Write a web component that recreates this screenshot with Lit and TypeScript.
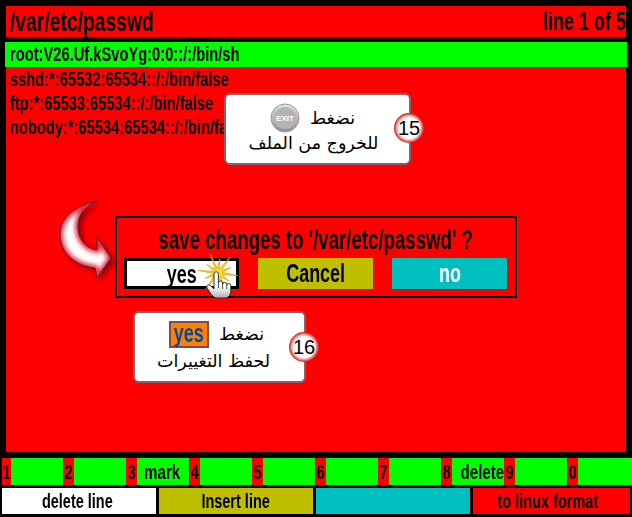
import { LitElement, html, css, svg } from "lit";
import { customElement } from "lit/decorators.js";

const keys = [["1",""],["2",""],["3","mark"],["4",""],["5",""],["6",""],["7",""],["8","delete"],["9",""],["0",""]];

const burst = (cx: number, cy: number) => {
  const pts: string[] = [];
  for (let i = 0; i < 24; i++) {
    const a = (i * Math.PI) / 12 + 0.13;
    const r = i % 2 ? 4.5 : i % 4 === 0 ? 20 : 14;
    pts.push(`${(cx + r * Math.cos(a)).toFixed(1)},${(cy + r * Math.sin(a)).toFixed(1)}`);
  }
  return pts.join(" ");
};

const arrowPath = "M97 201C78 205 60 216 60 234C60 254 76 266 95 268L97 278L111 258L97 237L97 250C84 248 78 238 78 226C78 214 86 206 97 201Z";

@customElement("app-root")
export class AppRoot extends LitElement {
  static styles = css`
    :host { display: block; position: relative; width: 632px; height: 517px; overflow: hidden; background: #000; color: #000;
      font-family: "Liberation Sans", sans-serif; font-weight: 700; }
    .t { display: inline-block; white-space: nowrap; transform: scaleX(.69); transform-origin: center; flex: none; }
    .t.l { transform-origin: left center; }
    .t.r { transform-origin: right center; }
    .screen { display: flex; flex-direction: column; height: 517px; }
    .title { margin: 6px 6px 5px; height: 31px; background: #f00; display: flex; justify-content: space-between; align-items: center; padding-left: 4px; font-size: 28px; line-height: 31px; }
    .title .pos { font-size: 26px; }
    .main { flex: none; margin: 0 6px; height: 410px; background: #f00; display: flex; flex-direction: column; }
    .row { height: 24px; line-height: 24px; padding-left: 4px; font-size: 21px; white-space: nowrap; }
    .row .t { transform: scaleX(.7); }
    .row.sel { height: 25px; background: #0f0; margin: 0 -1px; padding-left: 5px; }
    .keys { margin: 6px 0 0; height: 27px; display: grid; grid-template-columns: repeat(9, 63px) 65px; }
    .key { display: flex; background: #0f0; font-size: 21px; line-height: 27px; }
    .key:first-child { background: linear-gradient(90deg, #000 2px, #0f0 2px); }
    .num { width: 11px; background: #f00; flex: none; display: flex; justify-content: center; }
    .key:first-child .num { width: 9px; margin-left: 2px; }
    .lab { flex: 1; display: flex; justify-content: center; padding-right: 6px; }
    .lab .t { transform: scaleX(.72); }
    .soft { margin: 3px 2px 0; height: 26px; display: grid; grid-template-columns: 154px 154px 154px 157px; column-gap: 3px; }
    .soft div { display: flex; justify-content: center; line-height: 26px; font-size: 21px; }
    .soft .white { padding-right: 4px; }
    .soft .red { padding-right: 8px; }
    .white { background: #fff; } .olive { background: #bfbf00; } .cyan { background: #00bfbf; } .red { background: #f00; }
    .dialog { position: absolute; left: 115px; top: 216px; width: 402px; height: 82px; box-sizing: border-box; border: 2px solid #000; background: #f00; }
    .dialog .q { display: flex; justify-content: center; font-size: 27px; line-height: 28px; margin-top: 8px; }
    .btns { position: absolute; left: 7px; top: 40px; display: grid; grid-template-columns: repeat(3, 115px); column-gap: 19px; }
    .btn { height: 31px; box-sizing: border-box; display: flex; justify-content: center; line-height: 31px; font-size: 26px; }
    .btn.yes { background: #fff; border: 3px solid #000; line-height: 27px; }
    .btn.no { color: #fff; }
    .note { position: absolute; box-sizing: border-box; background: #fff; border: 2px solid #8c5f66; border-radius: 6px; color: #000; font-family: "DejaVu Sans", sans-serif; font-weight: 400; font-size: 17.5px; display: flex; flex-direction: column; align-items: center; }
    .n15 { left: 224px; top: 93px; width: 187px; height: 72px; padding-top: 9px; }
    .n16 { left: 133px; top: 311px; width: 173px; height: 72px; padding-top: 7px; }
    .line1 { display: flex; align-items: center; gap: 10px; direction: ltr; height: 28px; }
    .n15 .line1 { margin-right: 10px; margin-bottom: -1px; }
    .n16 .line1 { margin-bottom: 1px; margin-right: 6px; }
    .line2 { line-height: 24px; white-space: nowrap; }
    .n15 .line2 { margin-right: 8px; }
    .n16 .line2 { margin-right: 12px; }
    .chip { width: 40px; height: 27px; box-sizing: border-box; background: #ff7f00; border: 2px solid #7f4a50; color: #004a9f; font-family: "Liberation Sans", sans-serif; font-weight: 700; font-size: 26px; line-height: 21px; display: flex; justify-content: center; }
    .exit { width: 30px; height: 30px; flex: none; }
    .badge { position: absolute; width: 30px; height: 30px; box-sizing: border-box; border-radius: 50%; background: radial-gradient(circle closest-side, #fff 70%, #f7b4b4 80%, #d81414 100%); color: #000; font-family: "Liberation Sans", sans-serif; font-weight: 400; font-size: 20px; line-height: 30px; text-align: center; }
    .b15 { left: 394px; top: 113px; } .b16 { left: 289px; top: 332px; }
    .art { position: absolute; overflow: visible; }
    .arrow { left: 55px; top: 195px; width: 65px; height: 90px; }
    .hand { left: 195px; top: 252px; width: 50px; height: 52px; }
  `;

  render() {
    return html`
      <div class="screen">
        <div class="title"><span class="t l">/var/etc/passwd</span><span class="t r pos">line 1 of 5</span></div>
        <div class="main">
          <div class="row sel"><span class="t l">root:V26.Uf.kSvoYg:0:0::/:/bin/sh</span></div>
          <div class="row"><span class="t l">sshd:*:65532:65534::/:/bin/false</span></div>
          <div class="row"><span class="t l">ftp:*:65533:65534::/:/bin/false</span></div>
          <div class="row"><span class="t l">nobody:*:65534:65534::/:/bin/false</span></div>
        </div>
        <div class="keys">
          ${keys.map(([n, l]) => html`<div class="key"><span class="num"><span class="t">${n}</span></span><span class="lab">${l ? html`<span class="t">${l}</span>` : ""}</span></div>`)}
        </div>
        <div class="soft">
          <div class="white"><span class="t">delete line</span></div>
          <div class="olive"><span class="t">Insert line</span></div>
          <div class="cyan"></div>
          <div class="red"><span class="t">to linux format</span></div>
        </div>
      </div>

      <div class="note n15">
        <div class="line1">
          <svg class="exit" viewBox="0 0 30 30">
            <defs><linearGradient id="g1" x1="0" y1="0" x2="0" y2="1"><stop offset="0" stop-color="#e4e4e4"/><stop offset="1" stop-color="#8e8e8e"/></linearGradient></defs>
            <circle cx="15" cy="15" r="14" fill="url(#g1)" stroke="#9a9a9a"/>
            <circle cx="15" cy="15" r="11" fill="#b4b4b4"/>
            <text x="15" y="18" text-anchor="middle" font-family="Liberation Sans" font-weight="700" font-size="8" fill="#fff">EXIT</text>
          </svg>
          <span dir="rtl">نضغط</span>
        </div>
        <div class="line2" dir="rtl">للخروج من الملف</div>
      </div>
      <div class="badge b15">15</div>

      <div class="note n16">
        <div class="line1"><span class="chip"><span class="t">yes</span></span><span dir="rtl">نضغط</span></div>
        <div class="line2" dir="rtl">لحفظ التغييرات</div>
      </div>
      <div class="badge b16">16</div>

      <div class="dialog">
        <div class="q"><span class="t">save changes to '/var/etc/passwd' ?</span></div>
        <div class="btns">
          <div class="btn yes"><span class="t">yes</span></div>
          <div class="btn olive"><span class="t">Cancel</span></div>
          <div class="btn cyan no"><span class="t">no</span></div>
        </div>
      </div>

      <svg class="art arrow" viewBox="55 195 65 90">
        <defs>
          <clipPath id="ac"><path d="${arrowPath}"/></clipPath>
          <filter id="sh" x="-30%" y="-30%" width="160%" height="160%"><feGaussianBlur stdDeviation="2.5"/></filter>
          <filter id="ib" x="-30%" y="-30%" width="160%" height="160%"><feGaussianBlur stdDeviation="2.2"/></filter>
        </defs>
        ${svg`<path d="M101 204C82 208 65 219 64 237C64 257 80 269 99 271L101 281L115 261L101 240L101 253C88 251 82 241 82 229C82 217 90 209 101 204Z" fill="#7a0000" opacity=".75" filter="url(#sh)"/>`}
        <path d="${arrowPath}" fill="#fff"/>
        <g clip-path="url(#ac)"><path d="${arrowPath}" fill="none" stroke="#e62a3e" stroke-width="6" filter="url(#ib)"/></g>
        <path d="${arrowPath}" fill="none" stroke="#4a1a3a" stroke-width="1"/>
      </svg>

      <svg class="art hand" viewBox="195 252 50 52">
        <defs><linearGradient id="hg" x1="0" y1="0" x2="0" y2="1"><stop offset=".55" stop-color="#fff"/><stop offset="1" stop-color="#b0b0b0"/></linearGradient></defs>
        <polygon points="${burst(218, 273)}" fill="#f8d838" stroke="#d8a000" stroke-width=".7"/>
        <path d="M214 274a2.2 2.2 0 0 1 4.400 0V283a2.100 2.100 0 0 1 4.200 0V284.500a2.100 2.100 0 0 1 4.200 0V285.500a2 2 0 0 1 4 0V290C231 294 229 298 225 298H216C212 297 210 292 207 288C206 285 209 284 211 286L214 289Z" fill="url(#hg)" stroke="#222" stroke-width=".9"/>
        <path d="M218.400 283V288M222.600 284.500V289M226.800 285.500V289" fill="none" stroke="#222" stroke-width=".8"/>
      </svg>
    `;
  }
}
